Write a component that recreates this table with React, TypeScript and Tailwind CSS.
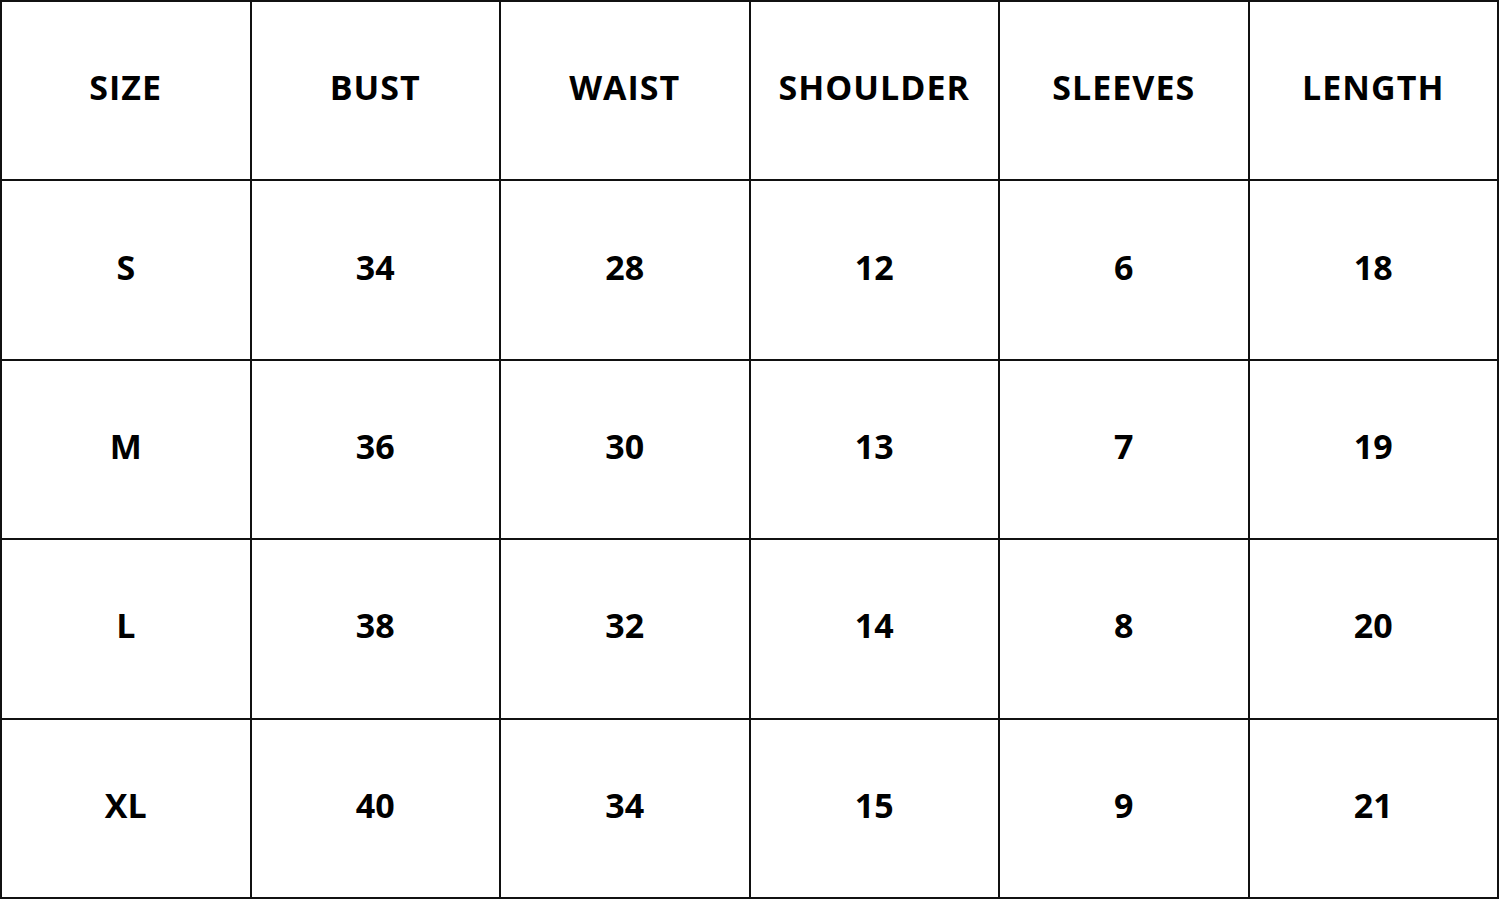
const headers = ['SIZE', 'BUST', 'WAIST', 'SHOULDER', 'SLEEVES', 'LENGTH']

const rows = [
  ['S', '34', '28', '12', '6', '18'],
  ['M', '36', '30', '13', '7', '19'],
  ['L', '38', '32', '14', '8', '20'],
  ['XL', '40', '34', '15', '9', '21'],
]

export default function App() {
  return (
    <div className="w-[1500px] h-[900px] bg-white">
      <div
        className="grid grid-cols-6 grid-rows-5 w-[1499px] h-[899px] border-l-2 border-t-2 border-[#111] text-black font-bold text-[34px]"
        style={{ fontFamily: '"Open Sans", sans-serif' }}
      >
        {headers.map((h) => (
          <div key={h} className="flex items-center justify-center pb-[6px] border-r-2 border-b-2 border-[#111] tracking-[0.03em]">
            {h}
          </div>
        ))}
        {rows.map((row, i) =>
          row.map((cell, j) => (
            <div key={`${i}-${j}`} className="flex items-center justify-center pb-[6px] border-r-2 border-b-2 border-[#111]">
              {cell}
            </div>
          ))
        )}
      </div>
    </div>
  )
}
